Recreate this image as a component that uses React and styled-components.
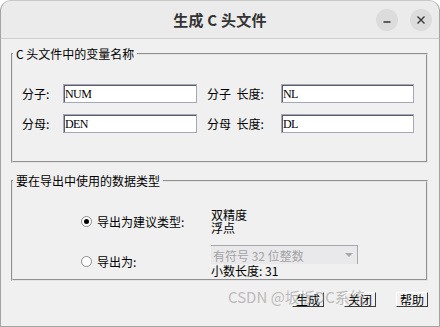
import React from "react";
import styled, { createGlobalStyle } from "styled-components";

const Global = createGlobalStyle`
  html, body { margin: 0; padding: 0; background: #ffffff; }
  body { font-family: "Noto Sans CJK SC", "Liberation Sans", sans-serif; font-size: 12px; color: #000; }
`;

const Window = styled.div`
  width: 440px;
  height: 327px;
  box-sizing: border-box;
  border: 1px solid #a4a4a4;
  border-top-color: #c8c8c8;
  border-radius: 11px 11px 0 0;
  background: #f0f0f0;
  overflow: hidden;
  display: flex;
  flex-direction: column;
`;

const TitleBar = styled.div`
  height: 37px;
  flex: none;
  background: #ebebeb;
  border-bottom: 1px solid #cfcfcf;
  display: grid;
  grid-template-columns: 1fr auto 1fr;
  align-items: center;
`;

const Title = styled.div`
  grid-column: 2;
  font-weight: bold;
  font-size: 15px;
  color: #333;
  letter-spacing: 0.2px;
`;

const WinButtons = styled.div`
  grid-column: 3;
  justify-self: end;
  display: flex;
  gap: 12px;
  padding-right: 7px;
`;

const WinButton = styled.div`
  width: 22px;
  height: 22px;
  border-radius: 50%;
  background: #dcdcdc;
  display: flex;
  align-items: center;
  justify-content: center;
`;

const Body = styled.div`
  flex: 1;
  padding: 7px 11px 0 10px;
  display: flex;
  flex-direction: column;
  align-items: stretch;
`;

const Group = styled.fieldset`
  margin: ${(p) => p.$top || 0}px 0 0 0;
  padding: ${(p) => p.$pad};
  border: 2px groove #e4e4e4;
  min-width: 0;
  width: 100%;
  box-sizing: border-box;
`;

const Legend = styled.legend`
  padding: 0 3px;
  margin-left: -9px;
  line-height: 16px;
  font-size: 12px;
`;

const NameGrid = styled.div`
  display: grid;
  grid-template-columns: 41px 134px 84px 133px;
  row-gap: 11px;
  align-items: center;
  & > :nth-child(4n + 3) { margin-left: 10px; }
`;

const Label = styled.span`
  line-height: 19px;
  white-space: pre;
`;

const Input = styled.div`
  height: 19px;
  box-sizing: border-box;
  background: #fff;
  border: 1px solid #a6a8ba;
  box-shadow: inset 1px 1px 0 #5c5c68;
  padding-left: 1px;
  font-family: "Liberation Serif", serif;
  font-size: 12px;
  line-height: 18px;
  letter-spacing: -0.6px;
  color: #000;
`;

const TypeGrid = styled.div`
  display: grid;
  grid-template-columns: 130px 150px;
  row-gap: 11px;
  align-items: center;
  padding-left: 59px;
`;

const RadioRow = styled.label`
  display: flex;
  align-items: center;
  gap: 5px;
  font-size: 12px;
`;

const Radio = styled.span`
  width: 11px;
  height: 11px;
  box-sizing: border-box;
  border-radius: 50%;
  border: 1px solid #8a8a8a;
  background: #fff;
  display: flex;
  align-items: center;
  justify-content: center;
  &::after {
    content: "";
    width: 5px;
    height: 5px;
    border-radius: 50%;
    background: ${(p) => (p.$checked ? "#000" : "transparent")};
  }
`;

const Lines = styled.div`
  line-height: 13px;
`;

const Combo = styled.div`
  width: 147px;
  height: 19px;
  box-sizing: border-box;
  background: #e9e9ec;
  border-top: 1px solid #a8a8a8;
  border-right: 1px solid #a8a8a8;
  color: #a2a2a2;
  display: flex;
  align-items: center;
  justify-content: space-between;
  padding: 0 4px 0 2px;
  line-height: 17px;
`;

const Arrow = styled.span`
  width: 0;
  height: 0;
  border-left: 4px solid transparent;
  border-right: 4px solid transparent;
  border-top: 4px solid #a8a8a8;
`;

const Footer = styled.div`
  position: relative;
  display: flex;
  justify-content: flex-end;
  gap: 20px;
  padding: 11px 0 0 0;
`;

const Button = styled.button`
  font-family: "Noto Sans CJK SC", sans-serif;
  font-size: 12px;
  width: 32px;
  height: 15px;
  line-height: 13px;
  padding: 0;
  background: #f0f0f0;
  color: #000;
  border: 1px solid;
  border-color: #ffffff #3c3c3c #3c3c3c #ffffff;
`;

const Watermark = styled.div`
  position: absolute;
  left: 217px;
  top: 6px;
  font-family: "Noto Sans CJK SC", "Liberation Sans", sans-serif;
  font-size: 15px;
  line-height: 20px;
  color: rgba(130, 130, 130, 0.5);
  pointer-events: none;
  white-space: nowrap;
`;

export default function App() {
  return (
    <>
      <Global />
      <Window>
        <TitleBar>
          <Title>生成 C 头文件</Title>
          <WinButtons>
            <WinButton>
              <svg width="10" height="10" viewBox="0 0 10 10">
                <path d="M1.5 7h7" stroke="#333" strokeWidth="1.3" />
              </svg>
            </WinButton>
            <WinButton>
              <svg width="10" height="10" viewBox="0 0 10 10">
                <path d="M1.5 1.5l7 7M8.5 1.5l-7 7" stroke="#333" strokeWidth="1.3" />
              </svg>
            </WinButton>
          </WinButtons>
        </TitleBar>
        <Body>
          <Group $pad="22px 11px 28px 9px">
            <Legend>C 头文件中的变量名称</Legend>
            <NameGrid>
              <Label>分子:</Label>
              <Input>NUM</Input>
              <Label>分子  长度:</Label>
              <Input>NL</Input>
              <Label>分母:</Label>
              <Input>DEN</Input>
              <Label>分母  长度:</Label>
              <Input>DL</Input>
            </NameGrid>
          </Group>
          <Group $top={10} $pad="19px 11px 2px 9px">
            <Legend>要在导出中使用的数据类型</Legend>
            <TypeGrid>
              <RadioRow>
                <Radio $checked />
                导出为建议类型:
              </RadioRow>
              <Lines>
                双精度
                <br />
                浮点
              </Lines>
              <RadioRow>
                <Radio />
                导出为:
              </RadioRow>
              <div>
                <Combo>
                  <span>有符号 32 位整数</span>
                  <Arrow />
                </Combo>
                <Lines>小数长度: 31</Lines>
              </div>
            </TypeGrid>
          </Group>
          <Footer>
            <Button>生成</Button>
            <Button>关闭</Button>
            <Button>帮助</Button>
            <Watermark>CSDN @坂坂DC系统</Watermark>
          </Footer>
        </Body>
      </Window>
    </>
  );
}
